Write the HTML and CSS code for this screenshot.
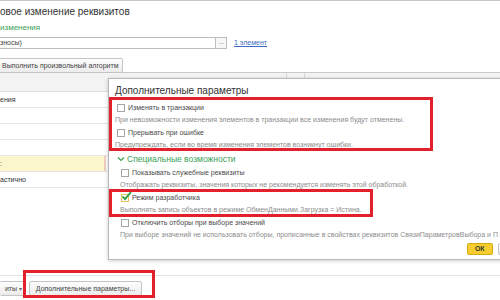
FILE: index.html
```html
<!DOCTYPE html>
<html>
<head>
  <title>Групповое изменение реквизитов</title>
  <link rel="stylesheet" href="styles.css">
</head>
<body>
  <div class="page">
    <div class="title">овое изменение реквизитов</div>
    <div class="group-label">изменения</div>

    <div class="field-row">
      <div class="field">зносы)</div>
      <div class="field-btn">...</div>
      <a class="link" href="#">1 элемент</a>
    </div>

    <div class="btn-row">
      <div class="btn">Выполнить произвольный алгоритм</div>
    </div>

    <div class="table">
      <div class="table-head">
        <div class="th th-main"></div>
        <div class="th th-a"></div>
        <div class="th th-rest"></div>
      </div>
      <div class="tr"><div class="td">ения</div></div>
      <div class="tr"><div class="td"></div></div>
      <div class="tr"><div class="td"></div></div>
      <div class="tr"><div class="td"></div></div>
      <div class="tr current"><div class="td">:</div></div>
      <div class="tr"><div class="td">астично</div></div>
    </div>

    <div class="footer">
      <div class="btn btn-menu">иты <span class="caret">▾</span></div>
      <div class="btn btn-params">Дополнительные параметры...</div>
      <div class="mark mark-footer"></div>
    </div>

    <div class="dialog">
      <div class="dialog-title">Дополнительные параметры</div>

      <div class="option">
        <span class="check"></span>
        <span class="option-label">Изменять в транзакции</span>
      </div>
      <div class="hint">При невозможности изменения элементов в транзакции все изменения будут отменены.</div>
      <div class="option">
        <span class="check"></span>
        <span class="option-label">Прерывать при ошибке</span>
      </div>
      <div class="hint">Предупреждать, если во время изменения элементов возникнут ошибки.</div>

      <div class="group-head">
        <svg class="chevron" width="8" height="6" viewBox="0 0 8 6"><path d="M1 1.5 L4 4.5 L7 1.5" fill="none" stroke="#3a9e52" stroke-width="1.2"/></svg>
        Специальные возможности
      </div>
      <div class="group-body">
        <div class="option">
          <span class="check"></span>
          <span class="option-label">Показывать служебные реквизиты</span>
        </div>
        <div class="hint">Отображать реквизиты, значения которых не рекомендуется изменять этой обработкой.</div>
        <div class="option">
          <span class="check checked">
            <svg class="tick" width="11" height="10" viewBox="0 0 11 10"><path d="M1.5 5.5 L4 8.2 L10 1" fill="none" stroke="#2a9a3c" stroke-width="1.8"/></svg>
          </span>
          <span class="option-label">Режим разработчика</span>
        </div>
        <div class="hint">Выполнять запись объектов в режиме ОбменДанными.Загрузка = Истина.</div>
        <div class="option">
          <span class="check"></span>
          <span class="option-label">Отключить отборы при выборе значений</span>
        </div>
        <div class="hint">При выборе значений не использовать отборы, прописанные в свойствах реквизитов СвязиПараметровВыбора и П</div>
      </div>

      <div class="dialog-buttons">
        <div class="btn-ok">ОК</div>
        <div class="btn btn-cancel"></div>
      </div>

      <div class="mark mark-one"></div>
      <div class="mark mark-two"></div>
    </div>
  </div>
</body>
</html>
```

FILE: styles.css
```css
body {
  margin: 0;
  font-family: 'Liberation Sans', Arial, sans-serif;
  color: #4a4a4a;
  background: #fff;
}
.page {
  position: relative;
  width: 500px;
  height: 300px;
  overflow: hidden;
  border-top: 1px solid #c8c8c8;
  box-sizing: border-box;
}
.title {
  font-size: 10px;
  color: #333;
  line-height: 14px;
  padding-top: 4px;
  white-space: nowrap;
}
.group-label {
  font-size: 8px;
  color: #3aa157;
  line-height: 12px;
  margin-top: 3px;
}
.field-row {
  display: flex;
  align-items: center;
  height: 13px;
  margin-top: 2px;
}
.field {
  width: 216px;
  height: 12px;
  box-sizing: border-box;
  border: 1px solid #bdbdbd;
  border-left: none;
  font-size: 7px;
  line-height: 10px;
  color: #444;
}
.field-btn {
  width: 11px;
  height: 12px;
  box-sizing: border-box;
  border: 1px solid #bdbdbd;
  border-left: none;
  font-size: 7px;
  line-height: 8px;
  text-align: center;
  color: #777;
  background: #f7f7f7;
}
.link {
  margin-left: 7px;
  font-size: 7px;
  color: #3d6cbf;
  text-decoration: underline;
}
.btn-row {
  margin-top: 5px;
  height: 15px;
}
.btn {
  display: inline-block;
  box-sizing: border-box;
  height: 15px;
  padding: 0 5px;
  border: 1px solid #c4c4c4;
  border-radius: 2px;
  background: linear-gradient(#fdfdfd, #ececec);
  font-size: 7px;
  line-height: 13px;
  color: #444;
  white-space: nowrap;
}
.btn-row .btn {
  width: 123px;
  padding-left: 2px;
  border-left: none;
  border-radius: 0 2px 2px 0;
}
.table {
  margin-top: 3px;
}
.table-head {
  display: flex;
  height: 18px;
  background: #f3f3f3;
  border-top: 1px solid #c9c9c9;
  border-bottom: 1px solid #dedede;
}
.th {
  border-right: 1px solid #d8d8d8;
}
.th-main { width: 286px; }
.th-a { width: 17px; }
.th-rest { flex: 1; border-right: none; }
.tr {
  height: 15px;
  border-bottom: 1px solid #e6e6e6;
}
.td {
  width: 106px;
  height: 15px;
  font-size: 7px;
  line-height: 15px;
  color: #333;
  box-sizing: border-box;
}
.current .td {
  background: #fcf6cd;
  border-right: 2px solid #f0cfc0;
}
.footer {
  position: absolute;
  left: 0;
  right: 0;
  top: 274px;
  height: 26px;
  border-top: 1px solid #e2e2e2;
  display: flex;
  align-items: flex-start;
  padding-top: 5px;
  box-sizing: border-box;
}
.btn-menu {
  width: 26px;
  padding: 0;
  text-align: right;
  padding-right: 3px;
  border-left: none;
}
.caret {
  font-size: 6px;
  color: #666;
}
.btn-params {
  margin-left: 3px;
  width: 113px;
  text-align: center;
}
.mark {
  position: absolute;
  border: 3px solid #e3202c;
  box-sizing: border-box;
  pointer-events: none;
}
.mark-footer {
  left: 23px;
  top: -6px;
  width: 132px;
  height: 28px;
}
.dialog {
  position: absolute;
  left: 108px;
  top: 77px;
  width: 430px;
  height: 182px;
  box-sizing: border-box;
  background: #fff;
  border: 1px solid #b8b8b8;
  box-shadow: 0 1px 4px rgba(0, 0, 0, 0.2);
  padding-top: 4px;
}
.dialog-title {
  font-size: 10px;
  line-height: 16px;
  color: #333;
  padding-left: 6px;
  margin-bottom: 2px;
}
.option {
  display: flex;
  align-items: center;
  height: 13px;
  padding-left: 8px;
}
.check {
  position: relative;
  width: 8px;
  height: 8px;
  box-sizing: border-box;
  border: 1px solid #a6a6a6;
  background: #fff;
  margin-right: 3px;
}
.check.checked {
  border-color: #e9c45a;
}
.tick {
  position: absolute;
  left: -1px;
  top: -4px;
}
.option-label {
  font-size: 7px;
  color: #4a4a4a;
}
.hint {
  font-size: 7px;
  line-height: 12px;
  color: #8c8c8c;
  padding-left: 6px;
  white-space: nowrap;
}
.group-head {
  display: flex;
  align-items: center;
  height: 15px;
  padding-left: 8px;
  font-size: 8.5px;
  color: #3aa157;
}
.chevron {
  margin-right: 2px;
}
.group-body .option {
  padding-left: 12px;
}
.group-body .hint {
  padding-left: 11px;
}
.dialog-buttons {
  display: flex;
  margin-top: 2px;
  padding-left: 358px;
  height: 12px;
}
.btn-ok {
  width: 26px;
  height: 12px;
  box-sizing: border-box;
  background: #f6cd2e;
  border: 1px solid #d7aa12;
  border-radius: 2px;
  font-size: 7px;
  font-weight: bold;
  line-height: 10px;
  text-align: center;
  color: #333;
}
.btn-cancel {
  margin-left: 5px;
  width: 40px;
  height: 12px;
}
.mark-one {
  left: 0;
  top: 18px;
  width: 324px;
  height: 54px;
}
.mark-two {
  left: 0;
  top: 110px;
  width: 264px;
  height: 28px;
}
```
